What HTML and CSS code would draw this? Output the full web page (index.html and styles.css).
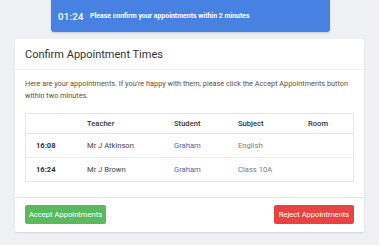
FILE: index.html
```html
<!DOCTYPE html>
<html>
<head>
<meta charset="utf-8">
<link rel="stylesheet" href="styles.css">
</head>
<body>
<div class="page">
  <div class="banner">
    <span class="timer">01:24</span>
    <span class="msg">Please confirm your appointments within 2 minutes</span>
  </div>
  <div class="card">
    <div class="card-header">Confirm Appointment Times</div>
    <div class="card-body">
      <p class="intro">Here are your appointments. If you're happy with them, please click the Accept Appointments button within two minutes.</p>
      <table class="appts">
        <thead>
          <tr><th class="c1"></th><th class="c2">Teacher</th><th class="c3">Student</th><th class="c4">Subject</th><th class="c5">Room</th></tr>
        </thead>
        <tbody>
          <tr><td class="time">16:08</td><td>Mr J Atkinson</td><td class="student">Graham</td><td class="subject">English</td><td></td></tr>
          <tr><td class="time">16:24</td><td>Mr J Brown</td><td class="student">Graham</td><td class="subject">Class 10A</td><td></td></tr>
        </tbody>
      </table>
    </div>
    <div class="card-footer">
      <button class="btn accept">Accept Appointments</button>
      <button class="btn reject">Reject Appointments</button>
    </div>
  </div>
</div>
</body>
</html>
```
FILE: styles.css
```css
html, body { margin: 0; padding: 0; }
body {
  background: #eff0f4;
  font-family: Roboto, "Liberation Sans", sans-serif;
  width: 379px;
  height: 245px;
  overflow: hidden;
}
.page {
  display: flex;
  flex-direction: column;
  align-items: center;
}
.banner {
  box-sizing: border-box;
  width: 279px;
  height: 32px;
  margin-left: 2px;
  background: #4782e2;
  border-radius: 0 0 3px 3px;
  box-shadow: 0 1px 2px rgba(0,0,0,0.15);
  color: #fff;
  display: flex;
  align-items: center;
  padding-left: 7px;
}
.timer {
  font-size: 9.6px;
  font-weight: 500;
  letter-spacing: 0.3px;
  width: 32px;
}
.msg {
  font-size: 6.9px;
  font-weight: 700;
}
.card {
  box-sizing: border-box;
  width: 349px;
  margin-top: 7px;
  background: #fff;
  border-radius: 2px;
  box-shadow: 0 1px 2px rgba(0,0,0,0.12);
}
.card-header {
  height: 31px;
  box-sizing: border-box;
  padding: 0 10px;
  display: flex;
  align-items: center;
  font-size: 11px;
  color: #333;
  border-bottom: 1px solid #f0f0f0;
}
.card-body {
  padding: 8px 10px 15px;
}
.intro {
  margin: 0 0 11px;
  font-size: 7.3px;
  line-height: 12px;
  color: #5f5040;
}
.appts {
  width: 329px;
  border-collapse: collapse;
  border: 1px solid #e6e6e6;
  font-size: 7.6px;
  color: #444;
}
.appts th, .appts td {
  text-align: left;
  padding: 0 0 0 10px;
}
.appts th {
  height: 19px;
  font-weight: 500;
  color: #333;
  border-bottom: 1px solid #e3e3e3;
}
.appts td {
  height: 23px;
  border-top: 1px solid #ececec;
}
.c1 { width: 41px; }
.c2 { width: 77px; }
.c3 { width: 54px; }
.c4 { width: 60px; }
.time { font-weight: 700; color: #333; }
.student { color: #3a6ea8; }
.subject { color: #857a62; }
.card-footer {
  border-top: 1px solid #e6e6e6;
  padding: 7px 10px 8px;
  display: flex;
  justify-content: space-between;
}
.btn {
  height: 19px;
  border: none;
  border-radius: 2px;
  color: #fff;
  font-family: Roboto, "Liberation Sans", sans-serif;
  font-size: 7.6px;
  padding: 0;
}
.accept { width: 81px; background: #5cb85c; }
.reject { width: 80px; background: #e84242; }
```
